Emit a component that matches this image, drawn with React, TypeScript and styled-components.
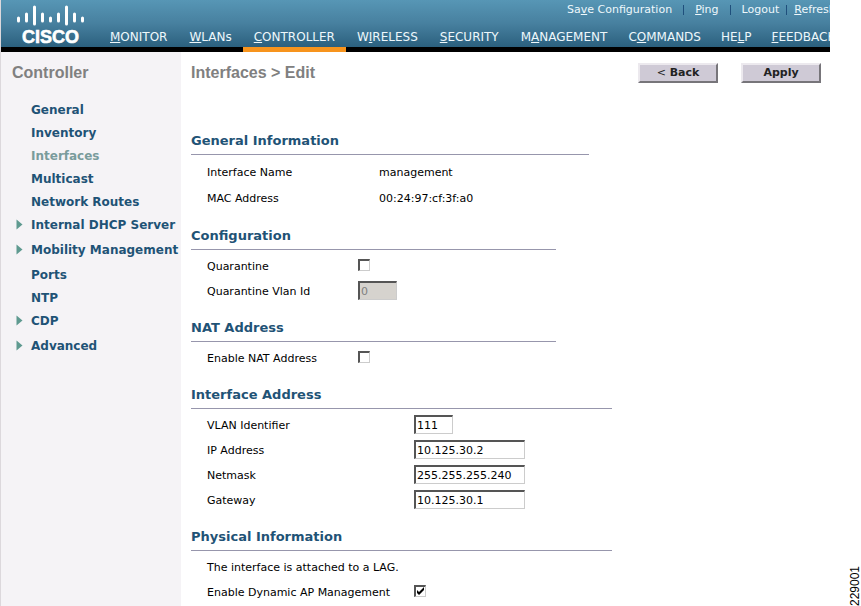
import React, { useId, useState } from "react";
import styled, { createGlobalStyle } from "styled-components";

const ui = `"DejaVu Sans", Verdana, sans-serif`;
const heading = `"Liberation Sans", Arial, sans-serif`;

const GlobalStyle = createGlobalStyle`
  *, *::before, *::after { box-sizing: border-box; }
  body { margin: 0; background: #fff; color: #000; font: 11px ${ui}; }
`;

const Page = styled.div`
  display: flex;
  height: 100vh;
  overflow: hidden;
`;

const Frame = styled.div`
  display: flex;
  flex: 1;
  flex-direction: column;
  min-width: 0;
  border-left: 1px solid #dcd8dc;
`;

const FigureMargin = styled.aside`
  display: flex;
  flex: none;
  align-items: flex-end;
  justify-content: flex-end;
  width: 31px;
`;

const FigureNumber = styled.span`
  font: 12px/12px ${heading};
  writing-mode: vertical-rl;
  transform: rotate(180deg);
`;

const Header = styled.header`
  display: flex;
  flex: none;
  height: 52px;
  overflow: hidden;
  background: linear-gradient(#5796b5, #47809f 50%, #2b607e) 0 0 / 100% 47px no-repeat #000;
`;

const Logo = styled.svg`
  flex: none;
  width: 98px;
  height: 47px;
`;

const Menus = styled.div`
  display: flex;
  flex: 1;
  flex-direction: column;
  justify-content: space-between;
  min-width: 0;
`;

const UtilityBar = styled.ul`
  display: flex;
  align-self: flex-end;
  width: 263px;
  margin: 0;
  padding: 0;
  list-style: none;
  font-size: 11px;
  line-height: 19px;
  white-space: nowrap;
`;

const UtilityItem = styled.li`
  display: flex;
  align-items: center;

  & + &::before {
    content: "";
    height: 10px;
    margin: 0 11px;
    border-left: 1px solid #1f4f7c;
  }

  &:last-child::before { margin: 0 7px; }
`;

const HeaderLink = styled.a`
  color: #eef8fc;
  text-decoration: none;
`;

const Nav = styled.nav`
  display: flex;
  white-space: nowrap;
`;

const NavTab = styled(HeaderLink)<{ $active?: boolean; $tight?: boolean }>`
  padding: 0 ${(p) => (p.$tight ? 10 : 11)}px 1px;
  border-bottom: 5px solid ${(p) => (p.$active ? "#f7941d" : "#000")};
  font-size: 12px;
  line-height: 18px;
`;

const Columns = styled.div`
  display: flex;
  flex: 1;
  min-height: 0;
`;

const Sidebar = styled.aside`
  flex: none;
  width: 180px;
  padding: 11px 0 0 11px;
  background: #f5f3f6;
`;

const PageTitle = styled.h1`
  margin: 0;
  color: #808080;
  font: bold 16px/20px ${heading};
`;

const SideList = styled.ul`
  margin: 15px 0 0;
  padding: 0;
  list-style: none;
`;

const SideItem = styled.li<{ $branch?: boolean }>`
  display: flex;
  align-items: center;
  height: 23px;
  margin-bottom: ${(p) => (p.$branch ? 2 : 0)}px;
`;

const ArrowSlot = styled.span`
  display: flex;
  flex: none;
  width: 19px;
  padding-left: 4px;
`;

const SideLink = styled.a<{ $current?: boolean }>`
  color: ${(p) => (p.$current ? "#7a9c9c" : "#1f5376")};
  font-size: 12px;
  font-weight: bold;
  text-decoration: none;
  white-space: nowrap;
`;

const Content = styled.main`
  flex: 1;
  min-width: 0;
  padding: 11px 9px 0 10px;
`;

const TitleBar = styled.div`
  display: flex;
  align-items: center;
  gap: 23px;
  margin-bottom: 49px;

  ${PageTitle} { flex: 1; }
`;

const PushButton = styled.button`
  width: 80px;
  height: 20px;
  padding: 0;
  border: 2px solid;
  border-color: #ece9ee #77757a #77757a #ece9ee;
  border-radius: 0;
  background: #cfcad6;
  color: #222;
  font: bold 11px/16px ${ui};
`;

const Chevron = styled.span`
  font-weight: normal;
`;

const Section = styled.section<{ $width: number; $label: number; $roomy?: boolean }>`
  --label: ${(p) => p.$label}px;
  --row: ${(p) => (p.$roomy ? 26 : 25)}px;
  max-width: ${(p) => p.$width}px;
  margin-bottom: 15px;
  padding-bottom: ${(p) => (p.$roomy ? 1 : 0)}px;
`;

const SectionTitle = styled.h2`
  margin: 0 0 4px;
  padding-bottom: 4px;
  border-bottom: 1px solid #9796ac;
  color: #1f5376;
  font-size: 13px;
  line-height: 18px;
`;

const Row = styled.div`
  display: grid;
  grid-template-columns: var(--label) 1fr;
  align-items: center;
  height: var(--row);
  padding-left: 16px;
`;

const Note = styled.p`
  margin: 0;
  padding-left: 16px;
  line-height: 25px;
`;

const TextBox = styled.input<{ $short?: boolean }>`
  width: ${(p) => (p.$short ? 39 : 111)}px;
  height: 19px;
  margin: 0 0 2px;
  padding: 0 1px;
  border: 1px solid;
  border-width: 2px 1px 1px 2px;
  border-color: #555 #ccc #ccc #555;
  border-radius: 0;
  background: #fff;
  color: #000;
  font: 11px ${ui};

  &:disabled { background: #d6d3ce; color: #808080; }
`;

const CheckWrap = styled.span`
  display: grid;
  width: 12px;
  height: 12px;
  margin-bottom: 3px;

  & > * { grid-area: 1 / 1; }
`;

const CheckInput = styled.input`
  width: 12px;
  height: 12px;
  margin: 0;
  border: 1px solid;
  border-width: 2px 1px 1px 2px;
  border-color: #555 #ccc #ccc #555;
  background: #fff;
  appearance: none;

  & + svg { visibility: hidden; pointer-events: none; }
  &:checked + svg { visibility: visible; }
`;

/** Text in which the letter at `index` is the underlined access key. */
function Keyed({ text, index }: { text: string; index: number }) {
  return (
    <>
      {text.slice(0, index)}
      <u>{text[index]}</u>
      {text.slice(index + 1)}
    </>
  );
}

function Check({ id, initial = false }: { id: string; initial?: boolean }) {
  const [on, setOn] = useState(initial);
  return (
    <CheckWrap>
      <CheckInput id={id} type="checkbox" checked={on} onChange={(e) => setOn(e.target.checked)} />
      <svg width="12" height="12" viewBox="0 0 12 12" aria-hidden="true">
        <path d="M3 5v3l2 2 5-5V2L5 7z" fill="#000" />
      </svg>
    </CheckWrap>
  );
}

function CheckRow({ label, initial }: { label: string; initial?: boolean }) {
  const id = useId();
  return (
    <Row>
      <label htmlFor={id}>{label}</label>
      <Check id={id} initial={initial} />
    </Row>
  );
}

function TextRow(props: { label: string; value: string; short?: boolean; disabled?: boolean }) {
  const id = useId();
  return (
    <Row>
      <label htmlFor={id}>{props.label}</label>
      <TextBox id={id} type="text" defaultValue={props.value} $short={props.short} disabled={props.disabled} />
    </Row>
  );
}

const utilities: [string, number][] = [["Save Configuration", 2], ["Ping", 0], ["Logout", 2], ["Refresh", 0]];

const tabs: { text: string; index: number; tight?: boolean }[] = [
  { text: "MONITOR", index: 0 },
  { text: "WLANs", index: 0 },
  { text: "CONTROLLER", index: 0 },
  { text: "WIRELESS", index: 1 },
  { text: "SECURITY", index: 0 },
  { text: "MANAGEMENT", index: 1 },
  { text: "COMMANDS", index: 1, tight: true },
  { text: "HELP", index: 2, tight: true },
  { text: "FEEDBACK", index: 0, tight: true },
];

const sideItems: { name: string; branch?: boolean }[] = [
  { name: "General" }, { name: "Inventory" }, { name: "Interfaces" }, { name: "Multicast" },
  { name: "Network Routes" }, { name: "Internal DHCP Server", branch: true },
  { name: "Mobility Management", branch: true }, { name: "Ports" }, { name: "NTP" },
  { name: "CDP", branch: true }, { name: "Advanced", branch: true },
];

const logoBars = [
  [18.5, 17, 22], [26.5, 13, 22], [34.5, 6, 25], [42.5, 13, 22], [50.5, 17, 22],
  [58.5, 13, 22], [66.5, 6, 25], [74.5, 13, 22], [82.5, 17, 22],
];

export default function App() {
  return (
    <Page>
      <GlobalStyle />
      <Frame>
        <Header>
          <Logo viewBox="1 0 98 47" role="img" aria-label="Cisco">
            <g stroke="#fff" strokeWidth="3" strokeLinecap="round">
              {logoBars.map(([x, top, bottom]) => (
                <path key={x} d={`M${x} ${top + 1}V${bottom - 1}`} />
              ))}
            </g>
            <text
              x="22" y="43" fill="#fff" stroke="#fff" strokeWidth="0.6"
              fontFamily="Liberation Sans, Arial, sans-serif" fontWeight="bold" fontSize="18"
            >
              CISCO
            </text>
          </Logo>
          <Menus>
            <UtilityBar>
              {utilities.map(([text, index]) => (
                <UtilityItem key={text}>
                  <HeaderLink href="#"><Keyed text={text} index={index} /></HeaderLink>
                </UtilityItem>
              ))}
            </UtilityBar>
            <Nav>
              {tabs.map(({ text, index, tight }) => (
                <NavTab key={text} href="#" $active={text === "CONTROLLER"} $tight={tight}>
                  <Keyed text={text} index={index} />
                </NavTab>
              ))}
            </Nav>
          </Menus>
        </Header>
        <Columns>
          <Sidebar>
            <PageTitle as="h2">Controller</PageTitle>
            <SideList>
              {sideItems.map(({ name, branch }) => (
                <SideItem key={name} $branch={branch}>
                  <ArrowSlot>
                    {branch && (
                      <svg width="7" height="11" viewBox="0 0 7 11" aria-hidden="true">
                        <path d="M0.500 0.500L6.500 5.500L0.500 10.500z" fill="#5f9a90" />
                      </svg>
                    )}
                  </ArrowSlot>
                  <SideLink href="#" $current={name === "Interfaces"}>{name}</SideLink>
                </SideItem>
              ))}
            </SideList>
          </Sidebar>
          <Content>
            <TitleBar>
              <PageTitle>Interfaces &gt; Edit</PageTitle>
              <PushButton type="button"><Chevron>&lt;</Chevron> Back</PushButton>
              <PushButton type="button">Apply</PushButton>
            </TitleBar>
            <Section $width={398} $label={172} $roomy>
              <SectionTitle>General Information</SectionTitle>
              <Row><span>Interface Name</span><span>management</span></Row>
              <Row><span>MAC Address</span><span>00:24:97:cf:3f:a0</span></Row>
            </Section>
            <Section $width={365} $label={151}>
              <SectionTitle>Configuration</SectionTitle>
              <CheckRow label="Quarantine" />
              <TextRow label="Quarantine Vlan Id" value="0" short disabled />
            </Section>
            <Section $width={365} $label={151}>
              <SectionTitle>NAT Address</SectionTitle>
              <CheckRow label="Enable NAT Address" />
            </Section>
            <Section $width={421} $label={207}>
              <SectionTitle>Interface Address</SectionTitle>
              <TextRow label="VLAN Identifier" value="111" short />
              <TextRow label="IP Address" value="10.125.30.2" />
              <TextRow label="Netmask" value="255.255.255.240" />
              <TextRow label="Gateway" value="10.125.30.1" />
            </Section>
            <Section $width={421} $label={207}>
              <SectionTitle>Physical Information</SectionTitle>
              <Note>The interface is attached to a LAG.</Note>
              <CheckRow label="Enable Dynamic AP Management" initial />
            </Section>
          </Content>
        </Columns>
      </Frame>
      <FigureMargin>
        <FigureNumber>229001</FigureNumber>
      </FigureMargin>
    </Page>
  );
}
